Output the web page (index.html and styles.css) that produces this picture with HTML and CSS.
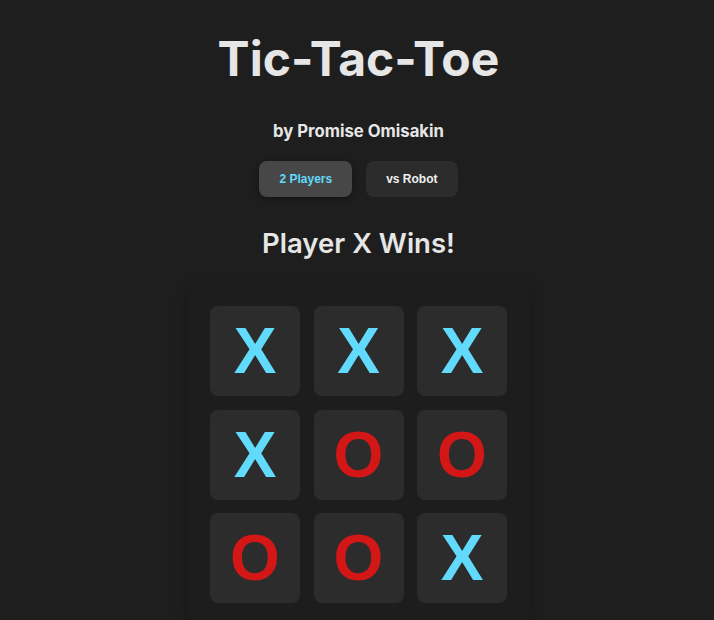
FILE: index.html
```html
<!DOCTYPE html>
<html>
<head>
<meta charset="utf-8">
<link rel="stylesheet" href="styles.css">
</head>
<body>
<div class="app">
  <h1 class="title">Tic-Tac-Toe</h1>
  <p class="author">by Promise Omisakin</p>
  <div class="modes">
    <button class="mode active">2 Players</button>
    <button class="mode">vs Robot</button>
  </div>
  <h2 class="status">Player X Wins!</h2>
  <div class="board">
    <div class="cell x">X</div>
    <div class="cell x">X</div>
    <div class="cell x">X</div>
    <div class="cell x">X</div>
    <div class="cell o">O</div>
    <div class="cell o">O</div>
    <div class="cell o">O</div>
    <div class="cell o">O</div>
    <div class="cell x">X</div>
  </div>
</div>
</body>
</html>
```

FILE: styles.css
```css
html, body {
  margin: 0;
  padding: 0;
  background: #1e1e1e;
  color: #e6e6e6;
  font-family: Inter, "Noto Sans", sans-serif;
}
.app {
  display: flex;
  flex-direction: column;
  align-items: center;
  padding-top: 30px;
  padding-left: 3px;
}
.title {
  margin: 0;
  font-size: 48px;
  line-height: 58px;
  font-weight: 700;
  color: #e6e6e6;
}
.author {
  margin: 33px 0 0;
  font-size: 16.7px;
  line-height: 20px;
  font-weight: 700;
  color: #e6e6e6;
}
.modes {
  display: flex;
  gap: 14px;
  margin-top: 20px;
}
.mode {
  font-family: "Liberation Sans", Arial, sans-serif;
  font-size: 12px;
  font-weight: 700;
  line-height: 14px;
  padding: 11px 20px;
  border: none;
  border-radius: 8px;
  background: #2c2c2c;
  color: #f0f0f0;
}
.mode.active {
  background: #474747;
  color: #61dafb;
  box-shadow: 0 2px 6px rgba(0,0,0,0.35);
}
.status {
  margin: 29px 0 0;
  font-size: 27.5px;
  line-height: 34px;
  font-weight: 600;
  color: #e6e6e6;
}
.board {
  margin-top: 24px;
  padding: 22px;
  display: grid;
  grid-template-columns: repeat(3, 90px);
  grid-auto-rows: 90px;
  gap: 13.5px;
  background: #1d1d1d;
  border-radius: 12px;
  box-shadow: 0 4px 16px rgba(0,0,0,0.25);
}
.cell {
  background: #2c2c2c;
  border-radius: 8px;
  display: flex;
  align-items: center;
  justify-content: center;
  font-family: "Liberation Sans", Arial, sans-serif;
  font-weight: 700;
  font-size: 64px;
}
.cell.x { color: #61dafb; }
.cell.o { color: #d31717; }
```
